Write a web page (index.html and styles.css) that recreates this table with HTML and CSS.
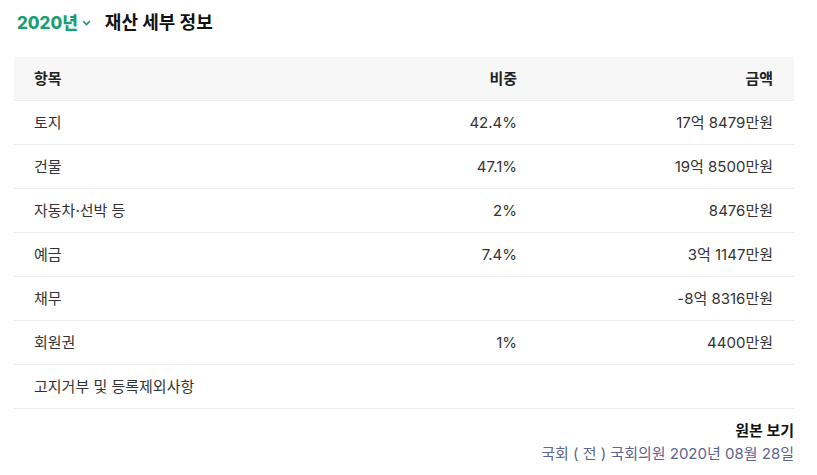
FILE: index.html
```html
<!DOCTYPE html>
<html lang="ko">
<head>
<meta charset="utf-8">
<link rel="stylesheet" href="styles.css">
</head>
<body>
<div class="page">
  <div class="head">
    <span class="year">2020년
      <svg class="chev" width="9" height="6" viewBox="0 0 9 6"><path d="M1.2 1.2l3.3 3.3 3.3-3.3" fill="none" stroke="#1a9f72" stroke-width="1.7"/></svg>
    </span>
    <h2 class="title">재산 세부 정보</h2>
  </div>
  <div class="table">
    <div class="row hdr"><div class="c1">항목</div><div class="c2">비중</div><div class="c3">금액</div></div>
    <div class="row"><div class="c1">토지</div><div class="c2">42.4%</div><div class="c3">17억 8479만원</div></div>
    <div class="row"><div class="c1">건물</div><div class="c2">47.1%</div><div class="c3">19억 8500만원</div></div>
    <div class="row"><div class="c1">자동차·선박 등</div><div class="c2">2%</div><div class="c3">8476만원</div></div>
    <div class="row"><div class="c1">예금</div><div class="c2">7.4%</div><div class="c3">3억 1147만원</div></div>
    <div class="row"><div class="c1">채무</div><div class="c2"></div><div class="c3">-8억 8316만원</div></div>
    <div class="row"><div class="c1">회원권</div><div class="c2">1%</div><div class="c3">4400만원</div></div>
    <div class="row"><div class="c1">고지거부 및 등록제외사항</div><div class="c2"></div><div class="c3"></div></div>
  </div>
  <div class="foot">
    <div class="orig">원본 보기</div>
    <div class="src">국회 ( 전 ) 국회의원 2020년 08월 28일</div>
  </div>
</div>
</body>
</html>
```
FILE: styles.css
```css
html, body { margin: 0; padding: 0; background: #fff; }
body { font-family: "Inter", "Noto Sans CJK KR", "Noto Sans", sans-serif; color: #333; }
.page { padding: 6px 23px 0 14px; width: 780px; }
.head { display: flex; align-items: center; gap: 14px; height: 30px; padding-left: 3px; }
.year { color: #1a9f72; font-weight: 800; font-size: 17px; display: flex; align-items: center; gap: 4px; }
.chev { margin-top: 3px; }
.title { margin: 0; font-size: 18px; font-weight: 700; color: #111; }
.table { margin-top: 21px; }
.row { display: grid; grid-template-columns: 1fr 200px 257px; height: 44px; align-items: center; border-bottom: 1px solid #ececec; font-size: 15px; box-sizing: border-box; }
.row > div { padding: 0 20px; line-height: 20px; }
.hdr { background: #f7f7f7; font-weight: 700; color: #222; }
.c2, .c3 { text-align: right; }
.c3 { padding-right: 21px !important; }
.foot { text-align: right; margin-top: 11px; }
.orig { font-weight: 700; font-size: 15px; color: #111; line-height: 22px; }
.src { font-size: 15px; color: #5b6590; line-height: 22px; margin-top: 1px; }
```
